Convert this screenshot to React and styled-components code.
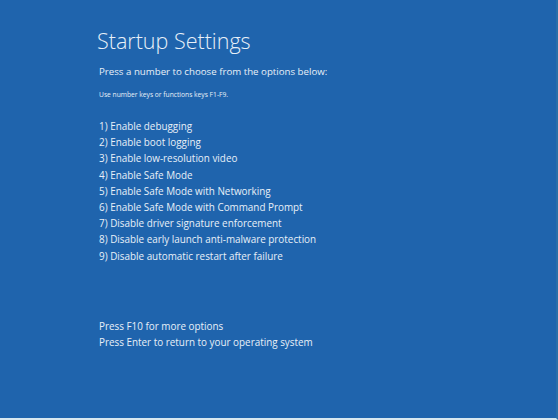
import React from 'react';
import styled, { createGlobalStyle } from 'styled-components';

const GlobalStyle = createGlobalStyle`
  html, body {
    margin: 0;
    padding: 0;
    background: #1f64ad;
  }
`;

const Screen = styled.div`
  width: 558px;
  height: 420px;
  box-sizing: border-box;
  background: #1f64ad;
  border-right: 2px solid #2a6fa8;
  border-bottom: 2px solid #d8e8f0;
  padding: 26px 0 0 97px;
  display: flex;
  flex-direction: column;
  color: #e8f0f8;
  font-family: "Open Sans", "Noto Sans", sans-serif;
`;

const Title = styled.h1`
  margin: 0;
  font-size: 21.5px;
  line-height: 30px;
  font-weight: 300;
  letter-spacing: 0;
`;

const Line = styled.div`
  font-size: ${(p) => p.size || 10}px;
  line-height: ${(p) => p.lh || 16.2}px;
  margin-top: ${(p) => p.gap || 0}px;
  padding-left: 2px;
  white-space: nowrap;
`;

const Options = styled.ol`
  list-style: none;
  margin: 17px 0 0;
  padding: 0;
`;

const options = [
  'Enable debugging',
  'Enable boot logging',
  'Enable low-resolution video',
  'Enable Safe Mode',
  'Enable Safe Mode with Networking',
  'Enable Safe Mode with Command Prompt',
  'Disable driver signature enforcement',
  'Disable early launch anti-malware protection',
  'Disable automatic restart after failure',
];

export default function App() {
  return (
    <>
      <GlobalStyle />
      <Screen>
        <Title>Startup Settings</Title>
        <Line gap={8} lh={16} size={9.7}>Press a number to choose from the options below:</Line>
        <Line gap={9} lh={12} size={6.7}>Use number keys or functions keys F1-F9.</Line>
        <Options>
          {options.map((o, i) => (
            <Line as="li" key={o} size={9.9}>{i + 1}) {o}</Line>
          ))}
        </Options>
        <Line gap={54} size={9.9}>Press F10 for more options</Line>
        <Line size={9.9}>Press Enter to return to your operating system</Line>
      </Screen>
    </>
  );
}
